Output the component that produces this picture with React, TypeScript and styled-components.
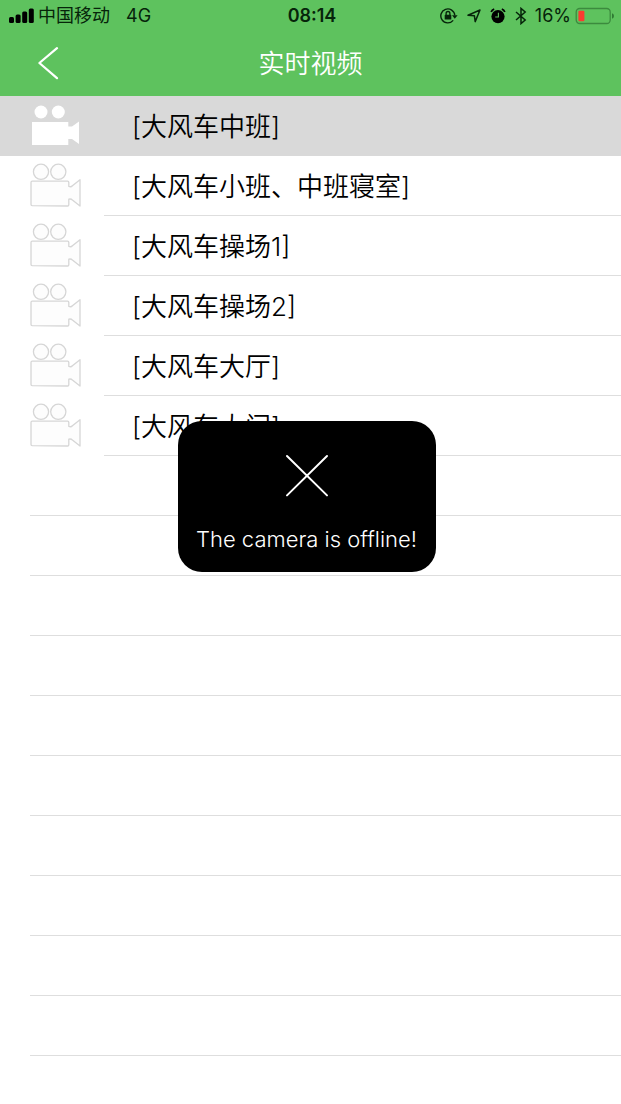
import React from "react";
import styled, { createGlobalStyle } from "styled-components";

const GlobalStyle = createGlobalStyle`
  * { box-sizing: border-box; }
  body {
    margin: 0;
    background: #fff;
    color: #000;
    font-family: Inter, "Noto Sans CJK SC", sans-serif;
  }
`;

const Page = styled.div`
  min-height: 100vh;
  background: #fff;
`;

const Header = styled.header`
  background: #5ec25e;
`;

const StatusBar = styled.div`
  display: grid;
  grid-template-columns: 1fr auto 1fr;
  align-items: center;
  height: 32px;
  padding: 0 6px 0 9px;
  font-size: 18px;
  line-height: 32px;
  color: #06240a;
`;

const StatusGroup = styled.div<{ $end?: boolean }>`
  display: flex;
  align-items: center;
  justify-content: ${(p) => (p.$end ? "flex-end" : "flex-start")};
  white-space: nowrap;
`;

const Carrier = styled.span`
  margin: 0 16px 0 4px;
`;

const Time = styled.time`
  font-weight: 600;
`;

const StatusIcons = styled.div`
  display: flex;
  align-items: center;
  gap: 9px;
  margin-right: 8px;
`;

const Battery = styled.svg`
  margin-left: 4px;
`;

const NavBar = styled.div`
  display: grid;
  grid-template-columns: 1fr auto 1fr;
  align-items: center;
  height: 64px;
`;

const BackButton = styled.button`
  display: flex;
  justify-self: start;
  padding: 0 36px;
  border: 0;
  background: none;
  cursor: pointer;
`;

const Title = styled.h1`
  margin: 0;
  font-size: 26px;
  font-weight: 350;
  line-height: 64px;
  color: #fff;
`;

const List = styled.ul`
  margin: 0;
  padding: 0;
  list-style: none;
`;

const Row = styled.button<{ $selected?: boolean }>`
  display: flex;
  align-items: center;
  width: 100%;
  height: 60px;
  padding: 0 0 0 30px;
  border: 0;
  background: ${(p) => (p.$selected ? "#d9d9d9" : "#fff")};
  color: #000;
  font: inherit;
  text-align: left;
  cursor: pointer;
`;

const RowLabel = styled.span<{ $selected?: boolean }>`
  flex: 1;
  height: 60px;
  margin-left: 22px;
  padding-left: 28px;
  border-bottom: 1px solid ${(p) => (p.$selected ? "#d9d9d9" : "#dedede")};
  font-size: 26px;
  font-weight: 350;
  line-height: 62px;
`;

const EmptyRow = styled.li`
  height: 60px;
  margin-left: 30px;
  border-bottom: 1px solid #dedede;
`;

const Toast = styled.div`
  position: fixed;
  top: 421px;
  left: calc(50% - 133px);
  display: flex;
  flex-direction: column;
  align-items: center;
  gap: 28px;
  width: 258px;
  height: 151px;
  padding-top: 33px;
  border-radius: 24px;
  background: #000;
  color: #fff;
  font-size: 22px;
  font-weight: 300;
  line-height: 28px;
  white-space: nowrap;
`;

const SignalIcon = () => (
  <svg width="25" height="16" viewBox="0 0 25 16" fill="#000" aria-hidden="true">
    <rect x="0" y="9" width="5" height="6" rx="1.5" />
    <rect x="6.6" y="6.5" width="5" height="8.5" rx="1.5" />
    <rect x="13.2" y="3.5" width="5" height="11.5" rx="1.5" />
    <rect x="19.8" y="0.5" width="5" height="14.5" rx="1.5" />
  </svg>
);

const LockIcon = () => (
  <svg width="18" height="16" viewBox="0 0 18 16" fill="none" stroke="#06240a" aria-hidden="true">
    <path d="M13.2 12.4A7 7 0 1 1 14.8 7.4" strokeWidth="1.4" />
    <path d="M12 7.2h5.6l-2.8 3.6z" fill="#06240a" stroke="none" />
    <rect x="4.7" y="6.8" width="6.6" height="4.8" rx=".6" fill="#06240a" stroke="none" />
    <path d="M6.1 7V5.4a1.9 1.9 0 0 1 3.8 0V7" strokeWidth="1.3" />
  </svg>
);

const LocationIcon = () => (
  <svg width="14" height="14" viewBox="0 0 14 14" fill="none" stroke="#06240a" strokeWidth="1.5" strokeLinejoin="round" aria-hidden="true">
    <path d="M13 1L8.2 12.6L7.4 6.8L1 6.2z" />
  </svg>
);

const AlarmIcon = () => (
  <svg width="16" height="16" viewBox="0 0 16 16" fill="none" stroke="#000" aria-hidden="true">
    <circle cx="8" cy="8.6" r="6.6" fill="#000" stroke="none" />
    <path d="M1.2 4Q2 1.8 4.2 1.2M14.8 4Q14 1.8 11.8 1.2" strokeWidth="1.8" />
    <path d="M8.4 4.8V9H5.2" stroke="#5ec25e" strokeWidth="1.1" />
  </svg>
);

const BluetoothIcon = () => (
  <svg width="12" height="18" viewBox="0 0 12 18" fill="none" stroke="#06240a" strokeWidth="1.5" aria-hidden="true">
    <path d="M1 5l9.2 8L6 16.6V1.4L10.2 5L1 13" />
  </svg>
);

const BatteryIcon = () => (
  <Battery width="40" height="18" viewBox="0 0 40 18" role="img" aria-label="Battery">
    <rect x="1.2" y="1.5" width="34" height="15" rx="3.5" fill="none" stroke="#3c8a3e" strokeWidth="1.3" />
    <rect x="3.4" y="3.7" width="6" height="10.6" rx="1" fill="#fb3b30" />
    <path d="M37 6.2q2 .8 2 2.8t-2 2.8z" fill="#2f7a33" />
  </Battery>
);

const CameraIcon = ({ filled }: { filled?: boolean }) =>
  filled ? (
    <svg width="52" height="48" viewBox="0 0 52 48" fill="#fff" aria-hidden="true">
      <circle cx="11" cy="10" r="6.5" />
      <circle cx="28.3" cy="10" r="6.5" />
      <path d="M2 20H38.3V24.5H42L49 19.5V42L42 37H38.3V43H2z" />
    </svg>
  ) : (
    <svg width="52" height="48" viewBox="0 0 52 48" fill="#fdfdfd" stroke="#d6d6d6" strokeWidth="1.3" strokeLinejoin="round" aria-hidden="true">
      <circle cx="11" cy="9.8" r="7.6" />
      <circle cx="28.3" cy="9.8" r="7.6" />
      <path d="M2.2 19.2H37.6Q38.8 19.2 38.8 20.4V24.4Q41 25.4 42.4 23.8L50 17.7V44L42.4 38Q41 36.6 38.8 37.2V42.8Q38.8 44 37.6 44L2.2 43.6Q1 43.4 1 42.4V20.4Q1 19.2 2.2 19.2z" />
    </svg>
  );

const cameras = [
  "[大风车中班]",
  "[大风车小班、中班寝室]",
  "[大风车操场1]",
  "[大风车操场2]",
  "[大风车大厅]",
  "[大风车大门]",
];

const emptyRows = Array.from({ length: 10 }, (_, i) => i);

export default function App() {
  return (
    <Page>
      <GlobalStyle />
      <Header>
        <StatusBar>
          <StatusGroup>
            <SignalIcon />
            <Carrier>中国移动</Carrier>
            <span>4G</span>
          </StatusGroup>
          <Time>08:14</Time>
          <StatusGroup $end>
            <StatusIcons>
              <LockIcon />
              <LocationIcon />
              <AlarmIcon />
              <BluetoothIcon />
            </StatusIcons>
            <span>16%</span>
            <BatteryIcon />
          </StatusGroup>
        </StatusBar>
        <NavBar>
          <BackButton aria-label="返回">
            <svg width="24" height="34" viewBox="0 0 24 34" fill="none" stroke="#fff" strokeWidth="2.2" strokeLinecap="round" strokeLinejoin="round" aria-hidden="true">
              <path d="M21 1.2L3.4 16L21 31.2" />
            </svg>
          </BackButton>
          <Title>实时视频</Title>
        </NavBar>
      </Header>
      <main>
        <List>
          {cameras.map((name, i) => (
            <li key={name}>
              <Row $selected={i === 0}>
                <CameraIcon filled={i === 0} />
                <RowLabel $selected={i === 0}>{name}</RowLabel>
              </Row>
            </li>
          ))}
          {emptyRows.map((i) => (
            <EmptyRow key={i} aria-hidden="true" />
          ))}
        </List>
      </main>
      <Toast role="alert">
        <svg width="44" height="43" viewBox="0 0 44 43" fill="none" stroke="#fff" strokeWidth="2" strokeLinecap="round" aria-hidden="true">
          <path d="M2 2L42 41.4M42 2L2 41.4" />
        </svg>
        <span>The camera is offline!</span>
      </Toast>
    </Page>
  );
}
